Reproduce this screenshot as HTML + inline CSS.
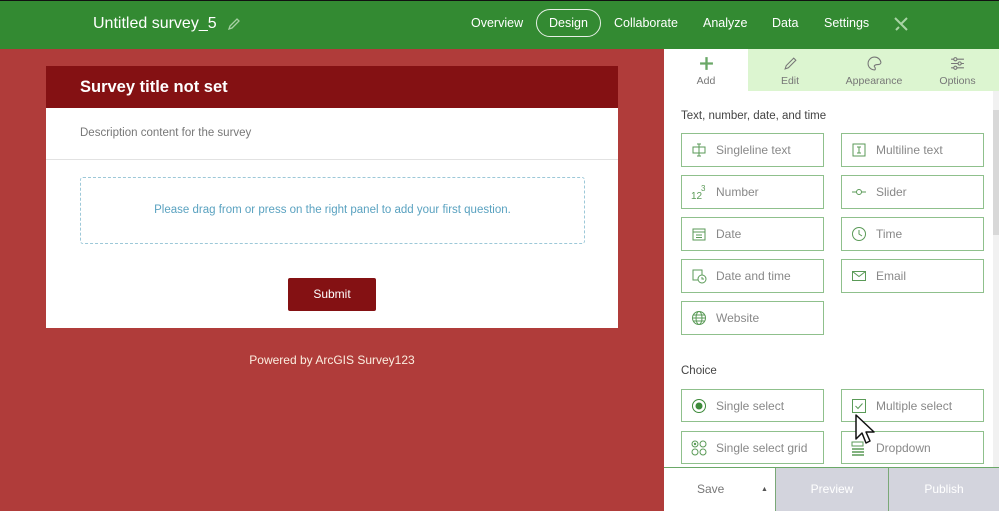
<!DOCTYPE html>
<html><head><meta charset="utf-8"><style>
*{box-sizing:border-box;margin:0;padding:0}
body{width:999px;height:511px;overflow:hidden;background:#b03c3a;font-family:"Liberation Sans",sans-serif;position:relative}
.a{position:absolute}
.top{left:0;top:0;width:999px;height:49px;background:#338a32;border-top:1px solid #111}
.nav{color:#fff;font-size:12.5px;top:16px}
.card{left:46px;top:66px;width:572px;height:262px;background:#fff}
.btn{width:143px;height:34px;border:1px solid #8fc08c;background:#fff;font-size:12px;color:#888;display:flex;align-items:center;padding-left:9px}
.btn svg{width:16px;height:16px;margin-right:9px;flex:none}
.tab{top:49px;height:42px;font-size:10.5px;color:#777;text-align:center;background:#dcf5d0}
.tab svg{display:block;margin:7px auto 4px;width:15px;height:15px}
</style></head><body>
<div class="a top"></div>
<div class="a" style="left:93px;top:15px;color:#fff;font-size:16px">Untitled survey_5</div>
<svg class="a" style="left:227px;top:17px" width="14" height="14" viewBox="0 0 14 14"><path d="M2 12l1-3 7-7 2 2-7 7z" fill="none" stroke="#a7d0a5" stroke-width="1.3"/></svg>
<div class="a nav" style="left:471px">Overview</div>
<div class="a" style="left:536px;top:9px;width:65px;height:28px;border:1px solid #e6f0e6;border-radius:14px"></div>
<div class="a nav" style="left:549px">Design</div>
<div class="a nav" style="left:614px">Collaborate</div>
<div class="a nav" style="left:703px">Analyze</div>
<div class="a nav" style="left:772px">Data</div>
<div class="a nav" style="left:824px">Settings</div>
<svg class="a" style="left:893px;top:16px" width="16" height="16" viewBox="0 0 16 16"><path d="M2 2l12 12M14 2L8 8M3 14l3-3" stroke="#a9d4a6" stroke-width="2"/></svg>

<div class="a card"></div>
<div class="a" style="left:46px;top:66px;width:572px;height:42px;background:#841113"></div>
<div class="a" style="left:80px;top:78px;color:#fff;font-size:16.5px;font-weight:bold">Survey title not set</div>
<div class="a" style="left:80px;top:127px;color:#777;font-size:11.5px">Description content for the survey</div>
<div class="a" style="left:46px;top:159px;width:572px;height:1px;background:#e2e2e2"></div>
<div class="a" style="left:80px;top:177px;width:505px;height:67px;border:1px dashed #9cc8d8;border-radius:3px"></div>
<div class="a" style="left:80px;top:204px;width:505px;text-align:center;color:#5aa2c0;font-size:11.5px">Please drag from or press on the right panel to add your first question.</div>
<div class="a" style="left:288px;top:278px;width:88px;height:33px;background:#841113;border-radius:2px;color:#fff;font-size:12px;text-align:center;line-height:33px">Submit</div>
<div class="a" style="left:46px;top:353px;width:572px;text-align:center;color:#fbeee0;font-size:12px">Powered by ArcGIS Survey123</div>

<div class="a" style="left:664px;top:49px;width:335px;height:462px;background:#fff"></div>
<div class="a" style="left:993px;top:91px;width:6px;height:376px;background:#f1f1f1"></div>
<div class="a" style="left:993px;top:110px;width:6px;height:125px;background:#d8d8d8"></div>
<div class="a tab" style="left:664px;width:84px;background:#fff"><svg viewBox="0 0 14 14"><path d="M7 1v12M1 7h12" stroke="#6aa867" stroke-width="2.2"/></svg>Add</div>
<div class="a tab" style="left:748px;width:84px"><svg viewBox="0 0 14 14"><path d="M2 12l1-3 7-7 2 2-7 7z" fill="none" stroke="#777" stroke-width="1"/></svg>Edit</div>
<div class="a tab" style="left:832px;width:84px"><svg viewBox="0 0 14 14"><path d="M7 1a6 6 0 100 12c1 0 1-2 0-3s1-2 3-2 3-1 3-2A6 6 0 007 1z" fill="none" stroke="#777"/></svg>Appearance</div>
<div class="a tab" style="left:916px;width:83px"><svg viewBox="0 0 14 14"><path d="M1 3h12M1 7h12M1 11h12" stroke="#777"/><circle cx="5" cy="3" r="1.5" fill="#dcf5d0" stroke="#777"/><circle cx="9" cy="7" r="1.5" fill="#dcf5d0" stroke="#777"/><circle cx="5" cy="11" r="1.5" fill="#dcf5d0" stroke="#777"/></svg>Options</div>
<div class="a" style="left:681px;top:110px;font-size:11.5px;color:#444">Text, number, date, and time</div>

<div class="a btn" style="left:681px;top:133px"><svg viewBox="0 0 16 16"><rect x="2" y="5" width="12" height="6" fill="none" stroke="#5a9a57"/><path d="M8 2v12M6 2h4M6 14h4" stroke="#5a9a57"/></svg>Singleline text</div>
<div class="a btn" style="left:841px;top:133px"><svg viewBox="0 0 16 16"><rect x="2" y="2" width="12" height="12" fill="none" stroke="#5a9a57"/><path d="M6 5h4M8 5v6M6 11h4" stroke="#5a9a57"/></svg>Multiline text</div>
<div class="a btn" style="left:681px;top:175px"><svg viewBox="0 0 16 16"><text x="0" y="15" font-size="10" fill="#5a9a57" font-family="Liberation Sans">12</text><text x="10" y="7" font-size="8" fill="#5a9a57" font-family="Liberation Sans">3</text></svg>Number</div>
<div class="a btn" style="left:841px;top:175px"><svg viewBox="0 0 16 16"><path d="M1 8h4M11 8h4" stroke="#5a9a57"/><circle cx="8" cy="8" r="2.5" fill="none" stroke="#5a9a57"/></svg>Slider</div>
<div class="a btn" style="left:681px;top:217px"><svg viewBox="0 0 16 16"><rect x="2" y="3" width="12" height="11" fill="none" stroke="#5a9a57"/><path d="M2 6h12M5 9h6M5 11.5h6" stroke="#5a9a57"/></svg>Date</div>
<div class="a btn" style="left:841px;top:217px"><svg viewBox="0 0 16 16"><circle cx="8" cy="8" r="6.5" fill="none" stroke="#5a9a57"/><path d="M8 4v4l3 2" fill="none" stroke="#5a9a57"/></svg>Time</div>
<div class="a btn" style="left:681px;top:259px"><svg viewBox="0 0 16 16"><rect x="2" y="2" width="9" height="10" fill="none" stroke="#5a9a57"/><circle cx="11" cy="11" r="4" fill="#fff" stroke="#5a9a57"/><path d="M11 9v2h2" fill="none" stroke="#5a9a57"/></svg>Date and time</div>
<div class="a btn" style="left:841px;top:259px"><svg viewBox="0 0 16 16"><rect x="1.5" y="3.5" width="13" height="9" fill="none" stroke="#5a9a57"/><path d="M1.5 3.5l6.5 5 6.5-5" fill="none" stroke="#5a9a57"/></svg>Email</div>
<div class="a btn" style="left:681px;top:301px"><svg viewBox="0 0 16 16"><circle cx="8" cy="8" r="6.5" fill="none" stroke="#5a9a57"/><ellipse cx="8" cy="8" rx="3" ry="6.5" fill="none" stroke="#5a9a57"/><path d="M1.5 8h13M2.5 5h11M2.5 11h11" stroke="#5a9a57"/></svg>Website</div>

<div class="a" style="left:681px;top:365px;font-size:11.5px;color:#444">Choice</div>
<div class="a btn" style="left:681px;top:389px;height:33px"><svg viewBox="0 0 16 16"><circle cx="8" cy="8" r="6.5" fill="none" stroke="#3d8a3a"/><circle cx="8" cy="8" r="3.5" fill="#3d8a3a"/></svg>Single select</div>
<div class="a btn" style="left:841px;top:389px;height:33px"><svg viewBox="0 0 16 16"><rect x="1.5" y="1.5" width="13" height="13" fill="none" stroke="#5a9a57"/><path d="M4.5 8l2.5 2.5 4.5-5" fill="none" stroke="#5a9a57"/></svg>Multiple select</div>
<div class="a btn" style="left:681px;top:431px;height:33px"><svg viewBox="0 0 16 16"><circle cx="4" cy="4" r="3" fill="none" stroke="#5a9a57"/><circle cx="12" cy="4" r="3" fill="none" stroke="#5a9a57"/><circle cx="4" cy="12" r="3" fill="none" stroke="#5a9a57"/><circle cx="12" cy="12" r="3" fill="none" stroke="#5a9a57"/><circle cx="4" cy="4" r="1.2" fill="#5a9a57"/></svg>Single select grid</div>
<div class="a btn" style="left:841px;top:431px;height:33px"><svg viewBox="0 0 16 16"><rect x="1" y="2" width="11" height="4" fill="none" stroke="#5a9a57"/><path d="M1 9h12M1 12h12M1 15h12" stroke="#5a9a57" stroke-width="1.5"/></svg>Dropdown</div>
<svg class="a" style="left:854px;top:413px" width="24" height="34" viewBox="0 0 24 34"><path d="M2 2v24l6-6 4 10 4-2-4-9h8z" fill="#fff" stroke="#111" stroke-width="1.5" stroke-linejoin="round"/></svg>

<div class="a" style="left:664px;top:467px;width:335px;height:1px;background:#6aa867"></div>
<div class="a" style="left:664px;top:468px;width:111px;height:43px;background:#fff;color:#777;font-size:12px;line-height:43px;padding-left:33px">Save<span style="position:absolute;left:97px;top:0;font-size:7px;color:#555">▲</span></div>
<div class="a" style="left:775px;top:468px;width:113px;height:43px;background:#d3d4dd;border-left:1px solid #7aa877;color:#fff;font-size:12px;line-height:43px;text-align:center">Preview</div>
<div class="a" style="left:888px;top:468px;width:111px;height:43px;background:#d3d4dd;border-left:1px solid #7aa877;color:#fff;font-size:12px;line-height:43px;text-align:center">Publish</div>
</body></html>
